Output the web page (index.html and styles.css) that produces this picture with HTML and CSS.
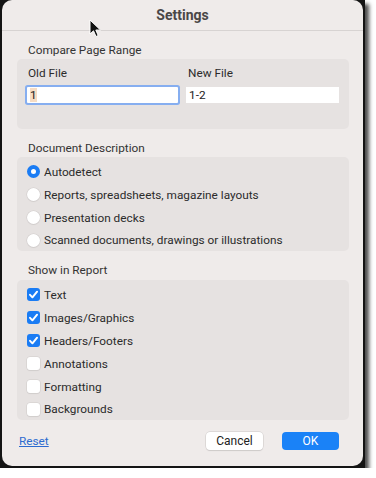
FILE: index.html
```html
<!DOCTYPE html>
<html lang="en">
<head>
    <meta charset="UTF-8">
    <title>Settings</title>
    <link rel="stylesheet" href="styles.css">
</head>
<body>
    <div class="frame">
        <div class="window">
            <div class="titlebar">Settings</div>

            <div class="content">
                <!-- Page range -->
                <div class="section-label">Compare Page Range</div>
                <div class="group range">
                    <div class="field">
                        <label>Old File</label>
                        <div class="textbox focused"><span class="selected">1</span></div>
                    </div>
                    <div class="field">
                        <label>New File</label>
                        <div class="textbox">1-2</div>
                    </div>
                </div>

                <!-- Document description -->
                <div class="section-label">Document Description</div>
                <div class="group list">
                    <div class="row"><span class="radio on"></span>Autodetect</div>
                    <div class="row"><span class="radio"></span>Reports, spreadsheets, magazine layouts</div>
                    <div class="row"><span class="radio"></span>Presentation decks</div>
                    <div class="row"><span class="radio"></span>Scanned documents, drawings or illustrations</div>
                </div>

                <!-- Show in report -->
                <div class="section-label">Show in Report</div>
                <div class="group list">
                    <div class="row"><span class="check on"><svg viewBox="0 0 12 12"><path d="M2.8 6.3 L5 8.6 L9.3 3.4" /></svg></span>Text</div>
                    <div class="row"><span class="check on"><svg viewBox="0 0 12 12"><path d="M2.8 6.3 L5 8.6 L9.3 3.4" /></svg></span>Images/Graphics</div>
                    <div class="row"><span class="check on"><svg viewBox="0 0 12 12"><path d="M2.8 6.3 L5 8.6 L9.3 3.4" /></svg></span>Headers/Footers</div>
                    <div class="row"><span class="check"></span>Annotations</div>
                    <div class="row"><span class="check"></span>Formatting</div>
                    <div class="row"><span class="check"></span>Backgrounds</div>
                </div>

                <div class="footer">
                    <a href="#" class="reset">Reset</a>
                    <div class="buttons">
                        <button class="btn">Cancel</button>
                        <button class="btn primary">OK</button>
                    </div>
                </div>
            </div>
        </div>

        <!-- mouse pointer -->
        <svg class="cursor" width="14" height="20" viewBox="0 0 14 20">
            <path d="M1 1 L1 15 L4.5 11.8 L7 17.5 L9.2 16.5 L6.8 11 L11.5 11 Z" fill="#111" stroke="#fff" stroke-width="1"/>
        </svg>
    </div>
</body>
</html>
```

FILE: styles.css
```css
body {
    margin: 0;
    background: #fff;
    font-family: "Roboto", "Liberation Sans", sans-serif;
    font-size: 11.8px;
    color: #2b2b2b;
}
.frame {
    position: relative;
    width: 363px;
    height: 468px;
    padding-left: 2px;
    background: #141414;
    box-shadow: 4px 4px 4px rgba(0, 0, 0, 0.7);
}
.window {
    width: 361px;
    height: 466px;
    background: #efebea;
    border-radius: 10px;
}
.titlebar {
    height: 30px;
    line-height: 31px;
    text-align: center;
    font-weight: 700;
    font-size: 14px;
    color: #4a4747;
    border-bottom: 1px solid #d7d3d2;
}
.content {
    padding: 0 14px 0 15px;
}
.section-label {
    height: 28px;
    line-height: 38px;
    padding-left: 11px;
    color: #333;
}
.group {
    background: #e6e2e1;
    border-radius: 5px;
}
.range {
    display: flex;
    height: 70px;
    padding: 0 10px 0 9px;
    gap: 7px;
    box-sizing: border-box;
}
.field {
    flex: 1;
}
.field label {
    display: block;
    height: 28px;
    line-height: 28px;
    padding-left: 2px;
}
.textbox {
    height: 16px;
    line-height: 16px;
    padding: 0 3px;
    color: #222;
    background: #fff;
}
.textbox.focused {
    box-shadow: 0 0 0 2px #86aef0;
    border-radius: 1px;
    margin: 0 1px;
}
.selected {
    background: #f6dcc4;
}
.list {
    padding-top: 3px;
}
.list + .section-label {
    height: 29px;
    line-height: 38px;
}
.row {
    display: flex;
    align-items: center;
    height: 23px;
    padding-left: 10px;
}
.row:last-child {
    height: 22px;
}
.radio {
    width: 13px;
    height: 13px;
    border-radius: 50%;
    background: #fff;
    box-shadow: 0 0 0 0.5px #cfcbca, 0 1px 1px rgba(0, 0, 0, 0.08);
    margin-right: 4px;
    box-sizing: border-box;
}
.radio.on {
    border: 4px solid #1a7cf4;
    box-shadow: none;
}
.check {
    width: 13px;
    height: 13px;
    border-radius: 3px;
    background: #fff;
    box-shadow: 0 0 0 0.5px #cfcbca, 0 1px 1px rgba(0, 0, 0, 0.08);
    margin-right: 4px;
    display: flex;
}
.check.on {
    background: #1a7cf4;
    box-shadow: none;
}
.check svg {
    width: 13px;
    height: 13px;
}
.check svg path {
    fill: none;
    stroke: #fff;
    stroke-width: 1.8;
    stroke-linecap: round;
    stroke-linejoin: round;
}
.footer {
    display: flex;
    justify-content: space-between;
    align-items: center;
    margin-top: 12px;
    padding: 0 10px 0 2px;
}
.reset {
    color: #2d6bd0;
    text-decoration: underline;
}
.buttons {
    display: flex;
    gap: 19px;
}
.btn {
    width: 57px;
    height: 18px;
    padding: 0;
    border: none;
    border-radius: 4px;
    font-family: inherit;
    font-size: 12px;
    background: #fff;
    color: #222;
    box-shadow: 0 0 0 0.5px #cbc7c6, 0 1px 1px rgba(0, 0, 0, 0.12);
}
.btn.primary {
    background: #1a82f7;
    color: #fff;
    box-shadow: none;
}
.cursor {
    position: absolute;
    left: 89px;
    top: 19px;
}
```
